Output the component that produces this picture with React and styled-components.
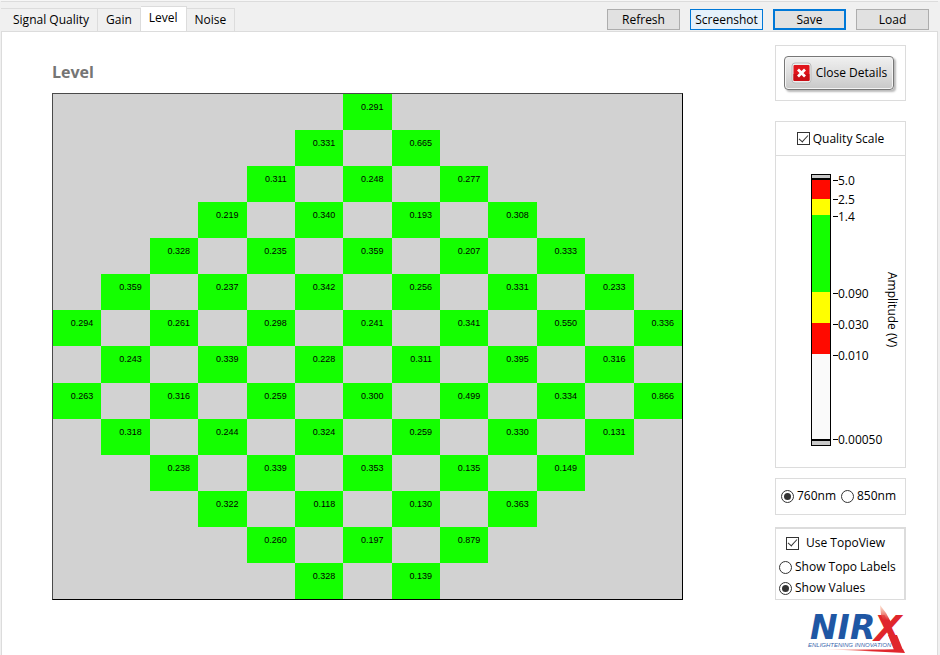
import React, { useState } from "react";
import styled, { createGlobalStyle, css } from "styled-components";

const GlobalStyle = createGlobalStyle`
  *, *::before, *::after { box-sizing: border-box; }
  body {
    margin: 0;
    background: #f0f0f0;
    color: #000;
    font: 12px/16px "Open Sans", "Noto Sans", sans-serif;
  }
  button, input { font: inherit; color: inherit; margin: 0; }
`;

const LINE = "#dcdcdc";

const Window = styled.div`
  display: flex;
  flex-direction: column;
  min-height: 100vh;
  padding: 0 2px 0 1px;
  border-top: 1px solid #f6f6f6;
`;

const TopBar = styled.header`
  display: flex;
  justify-content: space-between;
  align-items: flex-end;
  height: 30px;
  border-top: 1px solid ${LINE};
`;

const TabList = styled.div`
  display: flex;
  align-items: flex-end;
`;

const Tab = styled.button`
  height: 23px;
  padding: 0 8px;
  border: 1px solid ${LINE};
  border-width: 1px 1px 0 0;
  background: #f0f0f0;
  white-space: nowrap;

  &:first-child { padding-left: 12px; }

  ${(p) =>
    p.$active &&
    css`
      height: 26px;
      margin-bottom: -1px;
      padding-bottom: 3px;
      background: #fff;
    `}
`;

const Actions = styled.div`
  display: flex;
  gap: 10px;
  padding: 0 9px 1px 0;
`;

const tones = {
  plain: css`border: 1px solid #adadad; background: #e1e1e1;`,
  hover: css`border: 1px solid #0078d7; background: #e5f1fb;`,
  focus: css`border: 2px solid #0078d7; background: #e1e1e1;`,
};

const ActionButton = styled.button`
  width: 73px;
  height: 21px;
  padding: 0;
  line-height: 16px;
  white-space: nowrap;
  ${(p) => tones[p.$tone]}
`;

const Content = styled.main`
  flex: 1;
  display: grid;
  grid-template-columns: minmax(0, 1fr) 131px;
  column-gap: 92px;
  align-items: start;
  padding: 13px 31px 0 50px;
  border: 1px solid ${LINE};
  border-bottom: 0;
  background: #fff;
`;

const ChartArea = styled.section`
  padding-top: 17px;
`;

const Title = styled.h1`
  margin: 0 0 10px;
  color: #757575;
  font-size: 16px;
  line-height: 21px;
`;

const HeatMap = styled.table`
  width: 100%;
  height: 507px;
  table-layout: fixed;
  border-collapse: separate;
  border-spacing: 0;
  border: 1px solid #000;
  border-top-color: #4a4a4a;
  border-left-color: #4a4a4a;
  background: #d2d2d2;
`;

const Cell = styled.td`
  padding: 7px 8px 0 0;
  background: ${(p) => (p.$on ? "#14ff00" : "transparent")};
  font: 9px/12px "Liberation Sans", Arial, sans-serif;
  text-align: right;
  vertical-align: top;
`;

const Sidebar = styled.aside`
  display: flex;
  flex-direction: column;
`;

const Panel = styled.section`
  border: 1px solid ${LINE};
`;

const ClosePanel = styled(Panel)`
  display: flex;
  justify-content: center;
  padding: 10px 11px 10px 8px;
  margin-bottom: 20px;
`;

const CloseButton = styled.button`
  display: flex;
  align-items: center;
  justify-content: center;
  gap: 4px;
  width: 110px;
  height: 34px;
  padding: 0 0 1px;
  border: 1px solid #777;
  border-radius: 4px;
  background: linear-gradient(#f0f0f0, #dedede 50%, #c8c8c8);
  box-shadow: inset 0 0 0 1px #f4f4f4, 2px 2px 2px #bbb;
  white-space: nowrap;
`;

const ScalePanel = styled(Panel)`
  margin-bottom: 10px;
`;

const ScaleHeader = styled.div`
  display: flex;
  justify-content: center;
  height: 34px;
  border-bottom: 1px solid ${LINE};
`;

const ScaleBody = styled.div`
  display: flex;
  height: 311px;
  padding: 17px 5px 0 35px;
`;

const ColorBar = styled.div`
  width: 20px;
  height: 272px;
  margin-top: 1px;
  border: 1px solid #000;
`;

const Band = styled.div`
  height: ${(p) => p.$size}px;
  background: ${(p) => p.$color};
`;

const Ticks = styled.ul`
  flex: 1;
  margin: 0;
  padding: 0 0 0 2px;
  list-style: none;
`;

const Tick = styled.li`
  display: flex;
  align-items: flex-start;
  height: ${(p) => p.$size}px;

  &::before {
    content: "";
    width: 5px;
    height: 1px;
    margin-top: 7px;
    background: #000;
  }
`;

const AxisName = styled.div`
  align-self: flex-start;
  width: 16px;
  margin: 99px 0 0 -16px;
  writing-mode: vertical-rl;
  white-space: nowrap;
`;

const Option = styled.label`
  display: flex;
  align-items: center;
  gap: ${(p) => p.$gap || 3}px;
  white-space: nowrap;
`;

const CheckInput = styled.input.attrs({ type: "checkbox" })`
  appearance: none;
  display: grid;
  place-items: center;
  width: 13px;
  height: 13px;
  border: 1px solid #333;
  background: #fff;

  &:checked::after {
    content: "";
    width: 5px;
    height: 9px;
    margin-top: -3px;
    border: solid #333;
    border-width: 0 1px 1px 0;
    transform: rotate(42deg);
  }
`;

const RadioInput = styled.input.attrs({ type: "radio" })`
  appearance: none;
  display: grid;
  place-items: center;
  width: 13px;
  height: 13px;
  border: 1px solid #333;
  border-radius: 50%;
  background: #fff;

  &:checked::after {
    content: "";
    width: 7px;
    height: 7px;
    border-radius: 50%;
    background: #333;
  }
`;

const WavePanel = styled(Panel)`
  display: flex;
  align-items: center;
  justify-content: space-between;
  height: 37px;
  padding: 0 9px 1px 5px;
  margin-bottom: 12px;
`;

const TopoPanel = styled(Panel)`
  display: flex;
  flex-direction: column;
  gap: 5px;
  height: 73px;
  padding: 6px 0 0 3px;
  border-width: 2px 2px 1px 1px;
  margin-bottom: 5px;
`;

const Indent = styled.div`
  padding: 0 0 3px 7px;
`;

const Logo = styled.svg`
  align-self: flex-end;
  width: 100px;
  height: 50px;
`;

/* One entry for each row: column of the first filled cell, then every second cell. */
const rows = [
  [6, "0.291"],
  [5, "0.331", "0.665"],
  [4, "0.311", "0.248", "0.277"],
  [3, "0.219", "0.340", "0.193", "0.308"],
  [2, "0.328", "0.235", "0.359", "0.207", "0.333"],
  [1, "0.359", "0.237", "0.342", "0.256", "0.331", "0.233"],
  [0, "0.294", "0.261", "0.298", "0.241", "0.341", "0.550", "0.336"],
  [1, "0.243", "0.339", "0.228", "0.311", "0.395", "0.316"],
  [0, "0.263", "0.316", "0.259", "0.300", "0.499", "0.334", "0.866"],
  [1, "0.318", "0.244", "0.324", "0.259", "0.330", "0.131"],
  [2, "0.238", "0.339", "0.353", "0.135", "0.149"],
  [3, "0.322", "0.118", "0.130", "0.363"],
  [4, "0.260", "0.197", "0.879"],
  [5, "0.328", "0.139"],
].map(([start, ...values]) =>
  Array.from({ length: 13 }, (_, column) => {
    const offset = column - start;
    return offset >= 0 && offset % 2 === 0 ? values[offset / 2] : undefined;
  })
);

const bands = [
  ["#c8c8c8", 3],
  ["#000", 2],
  ["#ff0a00", 19],
  ["#ffff00", 16],
  ["#14ff00", 77],
  ["#ffff00", 31],
  ["#ff0a00", 31],
  ["#fafafa", 85],
  ["#000", 2],
  ["#c8c8c8", 4],
];

const ticks = [
  ["5.0", 19],
  ["2.5", 17],
  ["1.4", 77],
  ["0.090", 31],
  ["0.030", 31],
  ["0.010", 84],
  ["0.00050", 16],
];

const tabs = ["Signal Quality", "Gain", "Level", "Noise"];
const actions = [
  ["Refresh", "plain"],
  ["Screenshot", "hover"],
  ["Save", "focus"],
  ["Load", "plain"],
];

function CloseIcon() {
  return (
    <svg width="21" height="22" viewBox="0 0 21 22" aria-hidden="true">
      <rect x="1" y="1" width="19" height="20" rx="3" fill="#eee" stroke="#bbb" />
      <rect x="2.5" y="3" width="16" height="16" rx="1" fill="#e0151c" />
      <path d="M2.5 12h16v6a1 1 0 0 1-1 1h-14a1 1 0 0 1-1-1z" fill="#c90f16" />
      <path d="M7 7.5l7 7M14 7.5l-7 7" stroke="#fff" strokeWidth="2.8" />
    </svg>
  );
}

function NirxLogo() {
  return (
    <Logo viewBox="0 0 100 50" role="img" aria-label="NIRX Enlightening Innovation">
      <defs>
        <linearGradient id="flare" x1="0" y1="1" x2="0" y2="0">
          <stop offset="0.3" stopColor="#e0262c" />
          <stop offset="1" stopColor="#f6b48c" stopOpacity="0.4" />
        </linearGradient>
        <linearGradient id="sweep">
          <stop offset="0" stopColor="#f3a080" stopOpacity="0.3" />
          <stop offset="0.6" stopColor="#e0262c" />
        </linearGradient>
      </defs>
      <text x="4" y="34" fill="#1f57a4" fontFamily="DejaVu Sans" fontSize="33" fontWeight="700" fontStyle="italic">NIR</text>
      <text x="68" y="36" fill="#e0262c" fontFamily="DejaVu Sans" fontSize="36" fontWeight="700" fontStyle="italic">X</text>
      <path d="M74 0L75 10 80 22 86 19 80 8z" fill="url(#flare)" />
      <path d="M82 30L88 45H97L91 30z" fill="#e0262c" />
      <text x="2" y="42" fill="#3b68ad" fontFamily="Liberation Sans" fontSize="6" fontStyle="italic">ENLIGHTENING INNOVATION</text>
      <path d="M16 44Q60 45 97 44l2 4Q60 46 16 44z" fill="url(#sweep)" />
    </Logo>
  );
}

export default function App() {
  const [tab, setTab] = useState("Level");
  const [wave, setWave] = useState("760nm");
  const [topo, setTopo] = useState("Show Values");

  return (
    <>
      <GlobalStyle />
      <Window>
        <TopBar>
          <TabList role="tablist">
            {tabs.map((name) => (
              <Tab key={name} role="tab" aria-selected={tab === name} $active={tab === name} onClick={() => setTab(name)}>
                {name}
              </Tab>
            ))}
          </TabList>
          <Actions>
            {actions.map(([name, tone]) => (
              <ActionButton key={name} $tone={tone}>{name}</ActionButton>
            ))}
          </Actions>
        </TopBar>
        <Content>
          <ChartArea>
            <Title>Level</Title>
            <HeatMap>
              <tbody>
                {rows.map((row, r) => (
                  <tr key={r}>
                    {row.map((value, c) => (
                      <Cell key={c} $on={value !== undefined}>{value}</Cell>
                    ))}
                  </tr>
                ))}
              </tbody>
            </HeatMap>
          </ChartArea>
          <Sidebar>
            <ClosePanel>
              <CloseButton><CloseIcon />Close Details</CloseButton>
            </ClosePanel>
            <ScalePanel>
              <ScaleHeader>
                <Option><CheckInput defaultChecked />Quality Scale</Option>
              </ScaleHeader>
              <ScaleBody>
                <ColorBar>
                  {bands.map(([color, size], i) => <Band key={i} $color={color} $size={size} />)}
                </ColorBar>
                <Ticks>
                  {ticks.map(([label, size]) => <Tick key={label} $size={size}>{label}</Tick>)}
                </Ticks>
                <AxisName>Amplitude (V)</AxisName>
              </ScaleBody>
            </ScalePanel>
            <WavePanel>
              {["760nm", "850nm"].map((name) => (
                <Option key={name}>
                  <RadioInput name="wave" checked={wave === name} onChange={() => setWave(name)} />
                  {name}
                </Option>
              ))}
            </WavePanel>
            <TopoPanel>
              <Indent>
                <Option $gap={7}><CheckInput defaultChecked />Use TopoView</Option>
              </Indent>
              {["Show Topo Labels", "Show Values"].map((name) => (
                <Option key={name}>
                  <RadioInput name="topo" checked={topo === name} onChange={() => setTopo(name)} />
                  {name}
                </Option>
              ))}
            </TopoPanel>
            <NirxLogo />
          </Sidebar>
        </Content>
      </Window>
    </>
  );
}
